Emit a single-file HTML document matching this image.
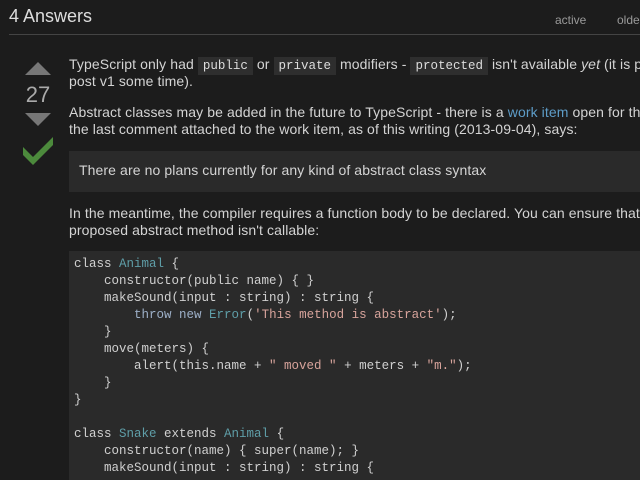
<!DOCTYPE html>
<html><head><style>
html,body{margin:0;padding:0;background:#1c1c1c;width:640px;height:480px;overflow:hidden;}
body{font-family:"Liberation Sans",Arial,sans-serif;color:#cfcfcf;}
#w{position:relative;width:640px;height:480px;overflow:hidden;}
.h{position:absolute;left:9px;top:6px;font-size:18px;color:#ddd;}
.tabs{position:absolute;top:13px;font-size:12px;color:#9a9a9a;}
.hr{position:absolute;left:9px;top:34px;width:631px;height:1px;background:#444;}
.up{position:absolute;left:25px;top:62px;width:0;height:0;border-left:13px solid transparent;border-right:13px solid transparent;border-bottom:13px solid #777;}
.dn{position:absolute;left:25px;top:113px;width:0;height:0;border-left:13px solid transparent;border-right:13px solid transparent;border-top:13px solid #777;}
.cnt{position:absolute;left:24px;top:82px;font-size:22px;color:#aaa;width:28px;text-align:center;}
.p{position:absolute;left:69px;font-size:14px;line-height:17px;white-space:nowrap;color:#d4d4d4;letter-spacing:0.1px;}
code{font-family:"Liberation Mono",monospace;font-size:12.5px;background:#2e2e2e;padding:2px 5px;color:#ddd;letter-spacing:0;}
.bq{position:absolute;left:69px;top:151px;width:571px;height:41px;background:#2a2a2a;}
.bq span{position:absolute;left:10px;top:11px;font-size:14px;color:#d4d4d4;white-space:nowrap;letter-spacing:0.1px;}
.pre{position:absolute;left:69px;top:251px;width:571px;height:229px;background:#2a2a2a;}
.pre pre{margin:0;position:absolute;left:5px;top:5px;font-family:"Liberation Mono",monospace;font-size:12.5px;line-height:17px;color:#d0d0d0;}
.t{color:#5f9ea8}.s{color:#d8a49c}.k{color:#9db0c8}
a{color:#5e9dc8;text-decoration:none}
</style></head><body><div id="w">
<div class="h">4 Answers</div>
<div class="tabs" style="left:555px">active</div>
<div class="tabs" style="left:617px">oldest</div>
<div class="hr"></div>
<div class="up"></div>
<div class="cnt">27</div>
<div class="dn"></div>
<svg style="position:absolute;left:22px;top:136px" width="32" height="32" viewBox="0 0 32 32"><path d="M1 19 L11 29 L31 9 L31 1 L11 21 L1 11 Z" fill="#4c8a3c"/></svg>
<div class="p" style="top:56px">TypeScript only had <code>public</code> or <code>private</code> modifiers - <code>protected</code> isn't available <i>yet</i> (it is planned for</div>
<div class="p" style="top:73px">post v1 some time).</div>
<div class="p" style="top:104px">Abstract classes may be added in the future to TypeScript - there is a <a>work item</a> open for this, and</div>
<div class="p" style="top:121px">the last comment attached to the work item, as of this writing (2013-09-04), says:</div>
<div class="bq"><span>There are no plans currently for any kind of abstract class syntax</span></div>
<div class="p" style="top:205px">In the meantime, the compiler requires a function body to be declared. You can ensure that the</div>
<div class="p" style="top:222px">proposed abstract method isn't callable:</div>
<div class="pre"><pre>class <span class="t">Animal</span> {
    constructor(public name) { }
    makeSound(input : string) : string {
        <span class="k">throw new</span> <span class="t">Error</span>(<span class="s">'This method is abstract'</span>);
    }
    move(meters) {
        alert(this.name + <span class="s">" moved "</span> + meters + <span class="s">"m."</span>);
    }
}

class <span class="t">Snake</span> extends <span class="t">Animal</span> {
    constructor(name) { super(name); }
    makeSound(input : string) : string {
</pre></div>
</div></body></html>
